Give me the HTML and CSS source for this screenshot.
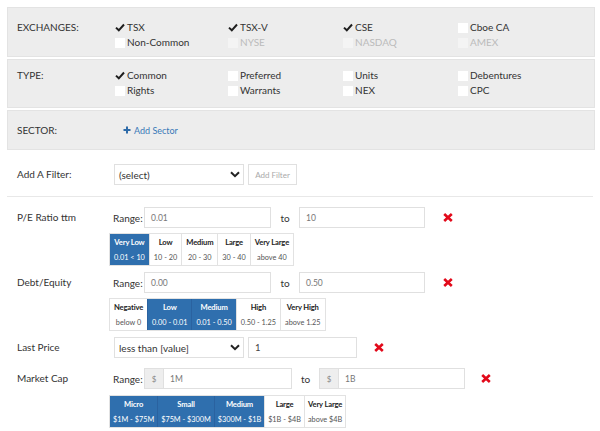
FILE: index.html
```html
<!DOCTYPE html>
<html>
<head>
<meta charset="utf-8">
<link rel="stylesheet" href="styles.css">
</head>
<body>
<div class="panel">
  <div class="prow prow-ex">
    <div class="plabel">EXCHANGES:</div>
    <div class="opts">
      <div class="opt"><svg class="chk" width="12" height="9" viewBox="0 0 12 9"><polyline points="1,4.6 3.8,7.3 9,1.5" fill="none" stroke="#1e1e1e" stroke-width="2"/></svg>TSX</div>
      <div class="opt"><svg class="chk" width="12" height="9" viewBox="0 0 12 9"><polyline points="1,4.6 3.8,7.3 9,1.5" fill="none" stroke="#1e1e1e" stroke-width="2"/></svg>TSX-V</div>
      <div class="opt"><svg class="chk" width="12" height="9" viewBox="0 0 12 9"><polyline points="1,4.6 3.8,7.3 9,1.5" fill="none" stroke="#1e1e1e" stroke-width="2"/></svg>CSE</div>
      <div class="opt"><span class="box"></span>Cboe CA</div>
      <div class="opt"><span class="box"></span>Non-Common</div>
      <div class="opt dis"><span class="box"></span>NYSE</div>
      <div class="opt dis"><span class="box"></span>NASDAQ</div>
      <div class="opt dis"><span class="box"></span>AMEX</div>
    </div>
  </div>
  <div class="prow prow-type">
    <div class="plabel">TYPE:</div>
    <div class="opts">
      <div class="opt"><svg class="chk" width="12" height="9" viewBox="0 0 12 9"><polyline points="1,4.6 3.8,7.3 9,1.5" fill="none" stroke="#1e1e1e" stroke-width="2"/></svg>Common</div>
      <div class="opt"><span class="box"></span>Preferred</div>
      <div class="opt"><span class="box"></span>Units</div>
      <div class="opt"><span class="box"></span>Debentures</div>
      <div class="opt"><span class="box"></span>Rights</div>
      <div class="opt"><span class="box"></span>Warrants</div>
      <div class="opt"><span class="box"></span>NEX</div>
      <div class="opt"><span class="box"></span>CPC</div>
    </div>
  </div>
  <div class="prow prow-sector">
    <div class="plabel">SECTOR:</div>
    <div class="addsector"><svg class="plus" width="8" height="8" viewBox="0 0 8 8"><path d="M4 0.5V7.5M0.5 4H7.5" stroke="#2d6aa8" stroke-width="2"/></svg>Add Sector</div>
  </div>
</div>

<div class="addrow">
  <div class="flabel">Add A Filter:</div>
  <div class="select"><span>(select)</span><svg class="chev" width="10" height="7" viewBox="0 0 10 7"><polyline points="1,1.2 5,5.2 9,1.2" fill="none" stroke="#222" stroke-width="2"/></svg></div>
  <div class="btn-add">Add Filter</div>
</div>

<div class="filters">
  <div class="frow">
    <div class="flabel">P/E Ratio ttm</div>
    <div class="fbody">
      <div class="line">
        <div class="rlab">Range:</div>
        <div class="inp w127">0.01</div>
        <div class="to">to</div>
        <div class="inp w126">10</div>
        <svg class="x" width="10" height="9" viewBox="0 0 10 9"><path d="M1.2 1L8.8 8M8.8 1L1.2 8" stroke="#e2091a" stroke-width="2.6"/></svg>
      </div>
      <div class="bgroup">
        <div class="b on"><div class="bt">Very Low</div><div class="bs">0.01 &lt; 10</div></div>
        <div class="b"><div class="bt">Low</div><div class="bs">10 - 20</div></div>
        <div class="b"><div class="bt">Medium</div><div class="bs">20 - 30</div></div>
        <div class="b"><div class="bt">Large</div><div class="bs">30 - 40</div></div>
        <div class="b"><div class="bt">Very Large</div><div class="bs">above 40</div></div>
      </div>
    </div>
  </div>

  <div class="frow">
    <div class="flabel">Debt/Equity</div>
    <div class="fbody">
      <div class="line">
        <div class="rlab">Range:</div>
        <div class="inp w127">0.00</div>
        <div class="to">to</div>
        <div class="inp w126">0.50</div>
        <svg class="x" width="10" height="9" viewBox="0 0 10 9"><path d="M1.2 1L8.8 8M8.8 1L1.2 8" stroke="#e2091a" stroke-width="2.6"/></svg>
      </div>
      <div class="bgroup">
        <div class="b"><div class="bt">Negative</div><div class="bs">below 0</div></div>
        <div class="b on"><div class="bt">Low</div><div class="bs">0.00 - 0.01</div></div>
        <div class="b on"><div class="bt">Medium</div><div class="bs">0.01 - 0.50</div></div>
        <div class="b"><div class="bt">High</div><div class="bs">0.50 - 1.25</div></div>
        <div class="b"><div class="bt">Very High</div><div class="bs">above 1.25</div></div>
      </div>
    </div>
  </div>

  <div class="frow">
    <div class="flabel">Last Price</div>
    <div class="fbody">
      <div class="line">
        <div class="select sel-lp"><span>less than [value]</span><svg class="chev" width="10" height="7" viewBox="0 0 10 7"><polyline points="1,1.2 5,5.2 9,1.2" fill="none" stroke="#222" stroke-width="2"/></svg></div>
        <div class="inp w109 dark">1</div>
        <svg class="x x-lp" width="10" height="9" viewBox="0 0 10 9"><path d="M1.2 1L8.8 8M8.8 1L1.2 8" stroke="#e2091a" stroke-width="2.6"/></svg>
      </div>
    </div>
  </div>

  <div class="frow frow-mc">
    <div class="flabel">Market Cap</div>
    <div class="fbody">
      <div class="line">
        <div class="rlab">Range:</div>
        <div class="addon">$</div>
        <div class="inp w129">1M</div>
        <div class="to to27">to</div>
        <div class="addon">$</div>
        <div class="inp w127">1B</div>
        <svg class="x x-mc" width="10" height="9" viewBox="0 0 10 9"><path d="M1.2 1L8.8 8M8.8 1L1.2 8" stroke="#e2091a" stroke-width="2.6"/></svg>
      </div>
      <div class="bgroup bgroup-mc">
        <div class="b on"><div class="bt">Micro</div><div class="bs">$1M - $75M</div></div>
        <div class="b on"><div class="bt">Small</div><div class="bs">$75M - $300M</div></div>
        <div class="b on"><div class="bt">Medium</div><div class="bs">$300M - $1B</div></div>
        <div class="b"><div class="bt">Large</div><div class="bs">$1B - $4B</div></div>
        <div class="b"><div class="bt">Very Large</div><div class="bs">above $4B</div></div>
      </div>
    </div>
  </div>
</div>
</body>
</html>
```

FILE: styles.css
```css
* { box-sizing: border-box; }
html, body { margin: 0; padding: 0; background: #fff; }
body {
  font-family: Lato, "Open Sans", sans-serif;
  font-size: 10px;
  color: #333;
  width: 600px;
  height: 431px;
  overflow: hidden;
}

.panel {
  margin: 7px 5px 0 7px;
  display: flex;
  flex-direction: column;
  gap: 2px;
}
.prow {
  background: #ededed;
  border: 1px solid #e3e3e3;
  display: flex;
  align-items: flex-start;
}
.prow-ex { height: 50px; padding-top: 12px; }
.prow-type { height: 49px; padding-top: 8px; }
.prow-sector { height: 40px; align-items: center; }
.plabel {
  width: 107px;
  padding-left: 9px;
  line-height: 15px;
  flex: none;
}
.opts {
  display: grid;
  grid-template-columns: 113px 115px 115px 115px;
  align-content: start;
}
.opt {
  display: flex;
  align-items: center;
  height: 15px;
  line-height: 15px;
}
.box {
  width: 10px;
  height: 10px;
  background: #fff;
  margin-right: 2px;
  flex: none;
}
.chk {
  display: block;
  flex: none;
  margin-right: 0;
}
.opt.dis { color: #bbb; }
.opt.dis .box { background: #f4f4f4; }

.addsector {
  color: #3a79b8;
  font-size: 9px;
  margin-left: 8px;
  display: flex;
  align-items: center;
}
.plus { display: block; margin-right: 3px; }

.addrow {
  margin: 14px 7px 0 7px;
  padding: 0 0 11px 10px;
  border-bottom: 1px solid #e8e8e8;
  display: flex;
  align-items: center;
}
.flabel {
  width: 97px;
  line-height: 21px;
  flex: none;
}
.select {
  width: 130px;
  height: 21px;
  border: 1px solid #e0e0e0;
  display: flex;
  align-items: center;
  justify-content: space-between;
  padding: 0 3px 0 4px;
  background: #fff;
}
.chev { display: block; }
.btn-add {
  margin-left: 4px;
  width: 49px;
  height: 21px;
  border: 1px solid #e0e0e0;
  color: #aaa;
  font-size: 8px;
  display: flex;
  align-items: center;
  justify-content: center;
}

.filters { padding: 10px 0 0 17px; }
.frow {
  display: flex;
  margin-bottom: 6px;
}
.frow .flabel { width: 92px; }
.fbody { display: flex; flex-direction: column; }
.line {
  display: flex;
  align-items: center;
  height: 21px;
}
.rlab {
  width: 35px;
  padding-left: 4px;
}
.inp {
  height: 21px;
  border: 1px solid #e0e0e0;
  font-size: 8.5px;
  color: #777;
  padding-left: 6px;
  display: flex;
  align-items: center;
  background: #fff;
}
.inp.dark { color: #444; font-size: 9.5px; }
.w127 { width: 127px; }
.w126 { width: 126px; }
.w129 { width: 129px; }
.w109 { width: 109px; }
.to { width: 28px; text-align: center; }
.to27 { width: 27px; }
.x {
  display: block;
  margin-left: 18px;
  margin-top: -1px;
}
.x-lp { margin-left: 17px; }
.x-mc { margin-left: 16px; }
.sel-lp { margin-left: 5px; margin-right: 4px; }
.addon {
  width: 19px;
  height: 21px;
  background: #eeeeee;
  border: 1px solid #e0e0e0;
  border-right: none;
  color: #888;
  font-size: 8px;
  display: flex;
  align-items: center;
  justify-content: center;
}

.bgroup {
  display: flex;
  margin-top: 5px;
  align-self: flex-start;
  border: 1px solid #e2e2e2;
}
.bgroup-mc { margin-top: 6px; }
.b {
  padding: 1px 4px 0;
  text-align: center;
  font-size: 7.3px;
  line-height: 15px;
  border-left: 1px solid #e2e2e2;
  color: #333;
}
.bgroup-mc .b { padding: 1px 3px 0; }
.b:first-child { border-left: none; }
.bt { font-weight: bold; color: #222; font-size: 7.6px; letter-spacing: -0.15px; }
.bs { color: #555; }
.b.on { background: #2f6fae; border-left-color: #2a62a0; }
.b.on .bt, .b.on .bs { color: #fff; }
.frow-mc { margin-top: 10px; }
```
